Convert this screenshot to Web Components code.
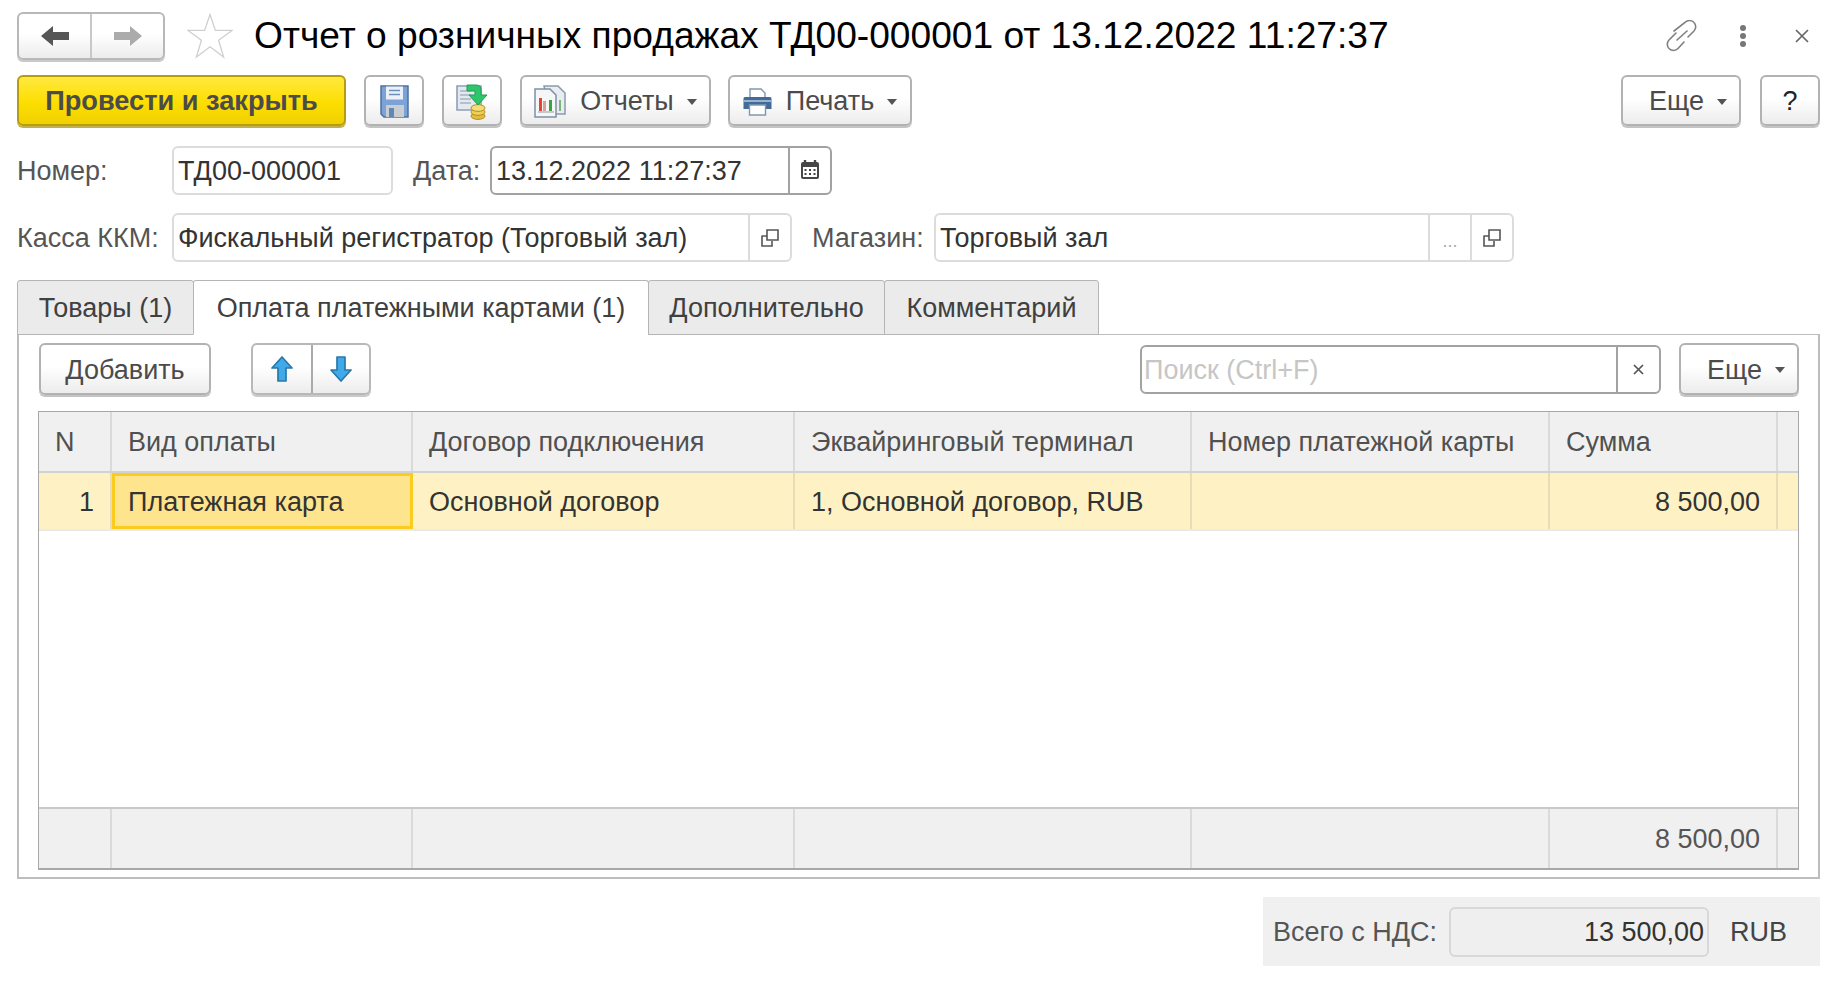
<!DOCTYPE html>
<html lang="ru">
<head>
<meta charset="utf-8">
<title>Отчет о розничных продажах</title>
<style>
  body { margin: 0; background: #fff; font-family: "Liberation Sans", Arial, sans-serif; font-size: 27px; color: #333; }
</style>
</head>
<body>
<retail-form></retail-form>

<script>
// plain button with gradient and bottom shadow
class UiBtn extends HTMLElement {
  constructor() {
    super();
    this.attachShadow({ mode: 'open' }).innerHTML = `
      <style>
        :host {
          display: inline-flex; align-items: center; justify-content: center; gap: 14px;
          box-sizing: border-box; height: 50px; flex: none; padding-top: 2px;
          border: 2px solid #b2b2b2; border-radius: 6px;
          background: linear-gradient(#fff 45%, #ececec);
          box-shadow: 0 2px 0 #c4c4c4;
          color: #4b4b4b; white-space: nowrap;
        }
        :host([primary]) {
          border-color: #b79c10; box-shadow: 0 2px 0 #c4b04a; padding-top: 0;
          background: linear-gradient(#ffe93f, #fdde00 55%, #f0d000);
          font-weight: bold; font-size: 27.2px;
        }
        :host([pad]) { padding-left: 14px; }
        .caret { display: none; width: 0; height: 0; border: 5px solid transparent; border-top: 6px solid #555; border-bottom: 0; margin-left: -1px; }
        :host([menu]) .caret { display: block; }
      </style>
      <slot name="icon"></slot><slot></slot><span class="caret"></span>`;
  }
}
customElements.define('ui-btn', UiBtn);

// two joined buttons
class SegGroup extends HTMLElement {
  constructor() {
    super();
    this.attachShadow({ mode: 'open' }).innerHTML = `
      <style>
        :host {
          display: grid; grid-template-columns: var(--first, 1fr) 1fr; box-sizing: border-box; flex: none;
          border: 2px solid #b8b8b8; border-radius: 6px;
          background: linear-gradient(#fff 45%, #ececec);
          box-shadow: 0 2px 0 #c9c9c9;
        }
        div { display: flex; align-items: center; justify-content: center; }
        div + div { border-left: 2px solid #c8c8c8; }
        :host([dark]) div + div { border-left-color: #aaa; }
      </style>
      <div><slot name="a"></slot></div><div><slot name="b"></slot></div>`;
  }
}
customElements.define('seg-group', SegGroup);

// input box, trailing buttons go in the "end" slot
class UiField extends HTMLElement {
  constructor() {
    super();
    this.attachShadow({ mode: 'open' }).innerHTML = `
      <style>
        :host {
          display: flex; box-sizing: border-box; height: 49px; flex: none;
          border: 2px solid #dcdcdc; border-radius: 6px; background: #fff; color: #333;
        }
        :host([strong]) { border-color: #a2a2a2; }
        :host([filled]) { background: #efefef; border-color: #d8d8d8; }
        :host([right]) .val { justify-content: flex-end; padding: 2px 3px 0 0; }
        .val { flex: 1; display: flex; align-items: center; padding: 2px 0 0 4px; white-space: nowrap; overflow: hidden; min-width: 0; }
        :host([hint]) .val { color: #c6c6c6; padding-left: 2px; }
        .end { display: flex; }
      </style>
      <div class="val"><slot></slot></div><div class="end"><slot name="end"></slot></div>`;
  }
}
customElements.define('ui-field', UiField);

class FieldEnd extends HTMLElement {
  constructor() {
    super();
    this.attachShadow({ mode: 'open' }).innerHTML = `
      <style>
        :host {
          display: flex; align-items: center; justify-content: center; box-sizing: border-box; width: 42px;
          border-left: 2px solid var(--line, #dcdcdc); color: #555;
        }
      </style><slot></slot>`;
  }
}
customElements.define('field-end', FieldEnd);

class TabBar extends HTMLElement {
  constructor() {
    super();
    this.attachShadow({ mode: 'open' }).innerHTML = `
      <style>
        :host { display: flex; height: 55px; margin-top: 18px; position: relative; z-index: 1; }
      </style><slot></slot>`;
  }
}
customElements.define('tab-bar', TabBar);

class TabItem extends HTMLElement {
  constructor() {
    super();
    this.attachShadow({ mode: 'open' }).innerHTML = `
      <style>
        :host {
          display: flex; align-items: center; justify-content: center; box-sizing: border-box; flex: none; height: 55px;
          border: 1px solid #b5b5b5; border-radius: 3px 3px 0 0; margin-right: -1px;
          background: #ebebeb; color: #404040; padding-top: 2px;
        }
        :host([active]) { background: #fff; border-bottom-color: #fff; }
      </style><slot></slot>`;
  }
}
customElements.define('tab-item', TabItem);

class PayRow extends HTMLElement {
  constructor() {
    super();
    this.attachShadow({ mode: 'open' }).innerHTML = `
      <style>
        :host {
          display: grid; grid-template-columns: 73px 301px 382px 397px 358px 228px 1fr; box-sizing: border-box; flex: none;
        }
        :host([kind=head]) { height: 61px; background: #f0f0f0; border-bottom: 2px solid #d2d2d2; color: #505050; }
        :host([kind=row]) { height: 58px; background: #fef2c5; border-bottom: 2px solid #eaeaea; color: #333; }
        :host([kind=foot]) { height: 61px; background: #f0f0f0; border-top: 2px solid #c9c9c9; color: #555; }
      </style><slot></slot>`;
  }
}
customElements.define('pay-row', PayRow);

class PayCell extends HTMLElement {
  constructor() {
    super();
    this.attachShadow({ mode: 'open' }).innerHTML = `
      <style>
        :host {
          display: flex; align-items: center; box-sizing: border-box; min-width: 0; padding: 2px 0 0 16px; white-space: nowrap;
          border-right: 2px solid rgba(0,0,0,.09);
        }
        :host(:last-child) { border-right: 0; padding: 0; }
        :host([num]) { justify-content: flex-end; padding: 2px 16px 0 0; }
        :host([sel]) { background: #fee48d; outline: 3px solid #fbcb1e; outline-offset: -3px; border-right: 0; }
      </style><slot></slot>`;
  }
}
customElements.define('pay-cell', PayCell);

class PayTable extends HTMLElement {
  constructor() {
    super();
    this.attachShadow({ mode: 'open' }).innerHTML = `
      <style>
        :host {
          display: flex; flex-direction: column; box-sizing: border-box; height: 459px; margin-top: 17px;
          border: 1px solid #a8a8a8; border-bottom-width: 2px; background: #fff;
        }
        .gap { flex: 1; }
      </style><slot name="top"></slot><div class="gap"></div><slot name="bottom"></slot>`;
  }
}
customElements.define('pay-table', PayTable);

class RetailForm extends HTMLElement {
  constructor() {
    super();
    this.attachShadow({ mode: 'open' }).innerHTML = `
      <style>
        :host { display: block; box-sizing: border-box; width: 1845px; padding: 12px 25px 0 17px; }
        .row { display: flex; align-items: center; }
        .head { height: 47px; }
        .title { font-size: 37.15px; color: #000; margin-left: 21px; white-space: nowrap; flex: 1; }
        .winbtn { display: flex; align-items: center; }
        .tools { height: 51px; margin-top: 16px; }
        .tools ui-btn { height: 51px; }
        .f1 { height: 49px; margin-top: 20px; }
        .f2 { height: 49px; margin-top: 18px; }
        .lbl { color: #555; white-space: nowrap; flex: none; padding-top: 2px; }
        .panel { box-sizing: border-box; height: 545px; border: 2px solid #bdbdbd; border-top-width: 1px; padding: 9px 19px 0 19px; margin-top: -1px; }
        .bar { height: 50px; }
        .bar ui-btn { height: 52px; }
        .bar seg-group { height: 52px; }
        .total { display: flex; align-items: center; box-sizing: border-box; height: 69px; width: 557px; margin: 18px 0 0 auto; padding: 0 0 0 10px; background: #f0f0f0; }
        .grow { flex: 1; }
      </style>

      <div class="row head">
        <seg-group style="width:148px;height:48px;--first:71px">
          <svg slot="a" width="28" height="20" viewBox="0 0 28 20"><path d="M0 10 12 0v6h16v8H12v6z" fill="#565656"/></svg>
          <svg slot="b" width="28" height="20" viewBox="0 0 28 20"><path d="M28 10 16 0v6H0v8h16v6z" fill="#ababab"/></svg>
        </seg-group>
        <svg style="margin-left:22px;flex:none" width="46" height="46" viewBox="0 0 46 46"><path d="M23 1.5 28.4 17.4H45L31.6 27.2 36.6 44 23 33.8 9.4 44 14.4 27.2 1 17.4H17.6z" fill="#fff" stroke="#cfcfcf" stroke-width="1.3"/></svg>
        <div class="title">Отчет о розничных продажах ТД00-000001 от 13.12.2022 11:27:37</div>
        <div class="winbtn">
          <svg style="margin-right:1px" width="32" height="32" viewBox="0 0 32 32" fill="none" stroke="#808080" stroke-width="1.600" stroke-linecap="round"><path d="M8 11 19 2.500A6 6 0 0 1 28 11L22 17"/><path d="M10 13 3 20A6 6 0 0 0 12 28.500L18 22"/><path d="M11 20 21 11"/></svg>
          <svg style="margin-left:40px" width="8" height="22" viewBox="0 0 8 22" fill="#777"><circle cx="4" cy="3" r="3"/><circle cx="4" cy="11" r="3"/><circle cx="4" cy="19" r="3"/></svg>
          <svg style="margin-left:48px;margin-right:11px" width="14" height="14" viewBox="0 0 14 14" stroke="#666" stroke-width="1.7"><path d="M1 1 13 13M13 1 1 13"/></svg>
        </div>
      </div>

      <div class="row tools">
        <ui-btn primary style="width:329px">Провести и закрыть</ui-btn>
        <ui-btn style="width:60px;margin-left:18px">
          <svg slot="icon" width="29" height="33" viewBox="0 0 29 33"><path d="M1 1h27v31H4l-3-3z" fill="#7da3d6" stroke="#4c729f" stroke-width="1.5"/><path d="M6 1.500h17v13H6z" fill="#fff" opacity=".85"/><path d="M9 5.500h11M9 9.500h11" stroke="#6a8fb8" stroke-width="1.5"/><path d="M6 20h18v12H6z" fill="#c9cfd1"/><path d="M9 23h5v9H9z" fill="#5f88b8"/></svg>
        </ui-btn>
        <ui-btn style="width:60px;margin-left:18px">
          <svg slot="icon" width="33" height="36" viewBox="0 0 33 36"><path d="M1 2h24v24H1z" fill="#e4e9ef" stroke="#8fa0b4" stroke-width="1.6"/><path d="M4 7h11M4 11h11M4 15h11M4 19h11" stroke="#a6b3c2" stroke-width="1.3"/><ellipse cx="22" cy="32" rx="7" ry="3.400" fill="#e4bd3e" stroke="#b18f23"/><ellipse cx="22" cy="28" rx="7" ry="3.400" fill="#efcf58" stroke="#b18f23"/><ellipse cx="22" cy="24" rx="7" ry="3.400" fill="#f5dc78" stroke="#b18f23"/><path d="M11 1h9q5 0 5 5v5h6l-9 10-9-10h6V7h-8z" fill="#2fc56a" stroke="#1f9e52"/></svg>
        </ui-btn>
        <ui-btn menu style="width:191px;margin-left:18px">
          <svg slot="icon" width="32" height="33" viewBox="0 0 32 33"><path d="M10 1h14l7 7v21H16z" fill="#e9edf1" stroke="#8a9aac" stroke-width="1.5"/><path d="M1 4h15l6 6v22H1z" fill="#f4f6f8" stroke="#7f90a3" stroke-width="1.5"/><path d="M5 13h3v13H5z" fill="#e8432e"/><path d="M9 16h3v10H9z" fill="#d9a0a0"/><path d="M15 15h3v11h-3z" fill="#35a640"/><path d="M25 15h2v11h-2z" fill="#7cb87c"/><path d="M4 27h16" stroke="#999"/></svg>
          Отчеты
        </ui-btn>
        <ui-btn menu style="width:184px;margin-left:17px">
          <svg slot="icon" width="29" height="28" viewBox="0 0 29 28"><path d="M7 1h11l4 4v8H7z" fill="#fff" stroke="#8296ae" stroke-width="1.4"/><path d="M2 9h25q1.500 0 1.500 1.500V21H23v-4H6v4H.5V10.500Q.5 9 2 9z" fill="#416b98"/><path d="M1 13h27" stroke="#b8cbe0" stroke-width="1.5"/><path d="M6.500 17h16v10h-16z" fill="#fff" stroke="#8296ae" stroke-width="1.4"/></svg>
          Печать
        </ui-btn>
        <div class="grow"></div>
        <ui-btn menu pad style="width:120px">Еще</ui-btn>
        <ui-btn style="width:60px;margin-left:19px;color:#222">?</ui-btn>
      </div>

      <div class="row f1">
        <span class="lbl" style="width:155px">Номер:</span>
        <ui-field style="width:221px">ТД00-000001</ui-field>
        <span class="lbl" style="margin-left:20px;width:77px">Дата:</span>
        <ui-field strong style="width:342px;--line:#a2a2a2">13.12.2022 11:27:37
          <field-end slot="end"><svg style="margin-top:-3px" width="18" height="20" viewBox="0 0 18 20"><path d="M2 3h14q2 0 2 2v13q0 2-2 2H2q-2 0-2-2V5q0-2 2-2z" fill="#474747"/><path d="M4 1v3M14 1v3" stroke="#474747" stroke-width="2.400"/><path d="M2 8h14v10H2z" fill="#fff"/><path d="M3.500 10h2v2h-2zM8 10h2v2H8zM12.500 10h2v2h-2zM3.500 14h2v2h-2zM8 14h2v2H8zM12.500 14h2v2h-2z" fill="#474747"/></svg></field-end>
        </ui-field>
      </div>

      <div class="row f2">
        <span class="lbl" style="width:155px">Касса ККМ:</span>
        <ui-field style="width:620px">Фискальный регистратор (Торговый зал)
          <field-end slot="end"><svg width="18" height="18" viewBox="0 0 18 18" fill="none" stroke="#555" stroke-width="1.600"><path d="M6 1h11v10H6z"/><path d="M1 7h5M1 6.500V17h10v-5"/></svg></field-end>
        </ui-field>
        <span class="lbl" style="margin-left:20px;width:122px">Магазин:</span>
        <ui-field style="width:580px">Торговый зал
          <field-end slot="end" style="color:#aaa;font-size:18px;align-items:flex-end;padding-bottom:8px">...</field-end>
          <field-end slot="end"><svg width="18" height="18" viewBox="0 0 18 18" fill="none" stroke="#555" stroke-width="1.600"><path d="M6 1h11v10H6z"/><path d="M1 7h5M1 6.500V17h10v-5"/></svg></field-end>
        </ui-field>
      </div>

      <tab-bar>
        <tab-item style="width:177px">Товары (1)</tab-item>
        <tab-item active style="width:456px">Оплата платежными картами (1)</tab-item>
        <tab-item style="width:237px">Дополнительно</tab-item>
        <tab-item style="width:215px">Комментарий</tab-item>
      </tab-bar>

      <div class="panel">
        <div class="row bar">
          <ui-btn style="width:172px;margin-left:1px">Добавить</ui-btn>
          <seg-group dark style="width:120px;margin-left:40px;--first:58px">
            <svg slot="a" width="22" height="26" viewBox="0 0 22 26"><path d="M11 1 21 12h-6v13H7V12H1z" fill="#3fa9ea" stroke="#2a78a8" stroke-width="1.700" stroke-linejoin="round"/></svg>
            <svg slot="b" width="22" height="26" viewBox="0 0 22 26"><path d="M11 25 21 14h-6V1H7v13H1z" fill="#3fa9ea" stroke="#2a78a8" stroke-width="1.700" stroke-linejoin="round"/></svg>
          </seg-group>
          <div class="grow"></div>
          <ui-field strong hint style="width:521px;--line:#a2a2a2">Поиск (Ctrl+F)
            <field-end slot="end" style="width:43px"><svg width="11" height="11" viewBox="0 0 11 11" stroke="#555" stroke-width="1.700"><path d="M1 1 10 10M10 1 1 10"/></svg></field-end>
          </ui-field>
          <ui-btn menu pad style="width:120px;margin-left:18px">Еще</ui-btn>
        </div>

        <pay-table>
          <pay-row slot="top" kind="head">
            <pay-cell>N</pay-cell><pay-cell>Вид оплаты</pay-cell><pay-cell>Договор подключения</pay-cell><pay-cell>Эквайринговый терминал</pay-cell><pay-cell>Номер платежной карты</pay-cell><pay-cell>Сумма</pay-cell><pay-cell></pay-cell>
          </pay-row>
          <pay-row slot="top" kind="row">
            <pay-cell num>1</pay-cell><pay-cell sel>Платежная карта</pay-cell><pay-cell>Основной договор</pay-cell><pay-cell>1, Основной договор, RUB</pay-cell><pay-cell></pay-cell><pay-cell num>8 500,00</pay-cell><pay-cell></pay-cell>
          </pay-row>
          <pay-row slot="bottom" kind="foot">
            <pay-cell></pay-cell><pay-cell></pay-cell><pay-cell></pay-cell><pay-cell></pay-cell><pay-cell></pay-cell><pay-cell num>8 500,00</pay-cell><pay-cell></pay-cell>
          </pay-row>
        </pay-table>
      </div>

      <div class="total">
        <span class="lbl">Всего с НДС:</span>
        <ui-field filled right style="width:260px;height:50px;margin-left:12px">13 500,00</ui-field>
        <span style="margin-left:21px;color:#444;padding-top:2px">RUB</span>
      </div>`;
  }
}
customElements.define('retail-form', RetailForm);
</script>
</body>
</html>
